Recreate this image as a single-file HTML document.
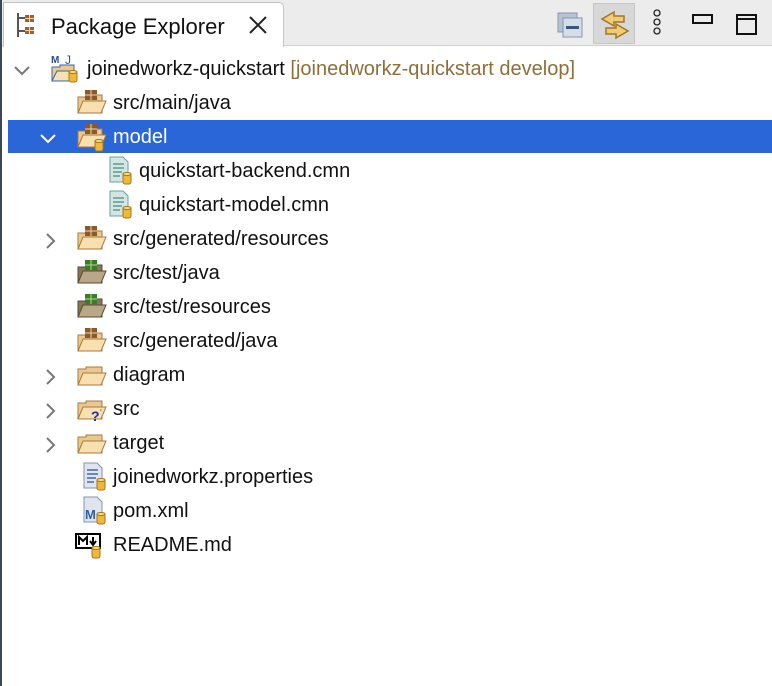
<!DOCTYPE html>
<html><head><meta charset="utf-8"><style>
body{margin:0;width:772px;height:686px;overflow:hidden;background:#fff;font-family:"Liberation Sans",Arial,sans-serif;position:relative}
.abs{position:absolute}
.row{position:absolute;left:8px;right:0;height:34px;font-size:20px;line-height:36px;color:#111}
.row span.t{position:absolute;top:0}
.chev{position:absolute;top:10px}
.ic{position:absolute;top:3px}
</style></head><body>
<div class="abs" style="left:0;top:0;width:772px;height:45px;background:#ececec;border-bottom:1px solid #cfcfcf"></div>
<div class="abs" style="left:3px;top:2px;width:279px;height:44px;background:#fff;border:1px solid #c4c4c4;border-bottom:none;border-radius:0 5px 0 0"></div>
<div class="abs" style="left:0;top:0;width:2px;height:686px;background:#3b4656"></div>
<svg class="abs" style="left:14px;top:12px" width="26" height="26" viewBox="0 0 26 26"><path d="M4 1V25M4 6H12M4 19H12" stroke="#555" stroke-width="2" fill="none"/><rect x="11" y="3" width="9" height="7" fill="#a0622a"/><rect x="11" y="15" width="9" height="7" fill="#a0622a"/><path d="M15.5 3V10M11 6.5H20M15.5 15V22M11 18.5H20" stroke="#f1d6a8" stroke-width="1"/></svg>
<div class="abs" style="left:51px;top:13px;font-size:22px;line-height:28px;color:#111">Package Explorer</div>
<svg class="abs" style="left:248px;top:15px" width="20" height="20"><path d="M2 2L18 18M18 2L2 18" stroke="#222" stroke-width="2"/></svg>
<div class="abs" style="left:593px;top:3px;width:42px;height:41px;background:#d8d8d8;border:1px solid #c6c6c6;box-sizing:border-box"></div>
<svg class="abs" style="left:555px;top:10px" width="32" height="30"><rect x="3" y="3" width="19" height="19" fill="#b6c3d3" stroke="#8796ab"/><rect x="8" y="8" width="19" height="19" fill="#d5dde7" stroke="#8796ab"/><rect x="11" y="16" width="13" height="3" fill="#3a5678"/></svg>
<svg class="abs" style="left:598px;top:9px" width="34" height="32"><path d="M16 3L4 10L16 17V13H26V7H16Z" fill="#f0cc77" stroke="#a47624" stroke-width="1.5"/><path d="M18 15L30 22L18 29V25H8V19H18Z" fill="#f0cc77" stroke="#a47624" stroke-width="1.5"/></svg>
<svg class="abs" style="left:650px;top:9px" width="14" height="28"><circle cx="7" cy="4" r="3" fill="none" stroke="#222" stroke-width="1.3"/><circle cx="7" cy="13" r="3" fill="none" stroke="#222" stroke-width="1.3"/><circle cx="7" cy="22" r="3" fill="none" stroke="#222" stroke-width="1.3"/></svg>
<div class="abs" style="left:692px;top:14px;width:17px;height:6px;border:2px solid #111"></div>
<div class="abs" style="left:736px;top:14px;width:17px;height:17px;border:2px solid #111"></div>
<div class="abs" style="left:738px;top:18px;width:17px;height:2px;background:#111"></div>

<div class="abs" style="left:8px;top:120px;width:764px;height:33px;background:#2b66d8"></div>

<svg width="0" height="0" style="position:absolute"><defs>
<g id="pkg"><path d="M2 9H10V7H26V25H2Z" fill="#e9c98f" stroke="#a9783c"/><path d="M2 25L7 13H30L25 25Z" fill="#f8e0b0" stroke="#a9783c"/><rect x="9" y="2" width="12" height="10" fill="#8a5a2c"/><path d="M15 2V12M9 7H21" stroke="#f1d6a8"/></g>
<g id="tpkg"><path d="M2 9H10V7H26V25H2Z" fill="#857559" stroke="#5a4a32"/><path d="M2 25L7 13H30L25 25Z" fill="#b8a887" stroke="#5a4a32"/><rect x="9" y="2" width="12" height="10" fill="#3d7a2a"/><path d="M15 2V12M9 7H21" stroke="#a8e08a"/></g>
<g id="fold"><path d="M2 9H10V7H26V25H2Z" fill="#e9c98f" stroke="#a9783c"/><path d="M2 25L7 13H30L25 25Z" fill="#f8e0b0" stroke="#a9783c"/></g>
<g id="jar"><rect x="19" y="18" width="8" height="11" rx="2" fill="#f0b73b" stroke="#a6761a"/><ellipse cx="23" cy="19" rx="4" ry="1.5" fill="#fbe08a" stroke="#a6761a"/></g>
<g id="doc"><path d="M6 2H19L24 7V27H6Z" fill="#d4e6e4" stroke="#6aa39c"/><path d="M9 9H20M9 13H20M9 17H18M9 21H16" stroke="#5e9a92" stroke-width="1.5"/></g>
<g id="chv"><path d="M3 3L10 10L3 17" stroke="#777" stroke-width="2" fill="none"/></g>
<g id="chd"><path d="M2 4L9 11L16 4" stroke="#777" stroke-width="2" fill="none"/></g>
</defs></svg>

<div class="row" style="top:51px"><svg class="chev" style="left:5px;top:12px" width="18" height="14"><use href="#chd"/></svg>
<svg class="ic" style="left:42px;top:2px" width="32" height="32"><text x="1" y="10" font-size="10" font-family="Liberation Sans" fill="#2a4f9a" font-weight="bold">M</text><text x="15" y="11" font-size="12" font-family="Liberation Sans" fill="#2a4f9a">J</text><path d="M2 14H10V12H24V28H2Z" fill="#e9c98f" stroke="#3a66b0"/><path d="M2 28L7 18H26L22 28Z" fill="#f8e0b0" stroke="#3a66b0"/><use href="#jar"/></svg>
<span class="t" style="left:79px">joinedworkz-quickstart <span style="color:#8d6f3a">[joinedworkz-quickstart develop]</span></span></div>
<div class="row" style="top:85px"><svg class="ic" style="left:68px" width="32" height="30"><use href="#pkg"/></svg><span class="t" style="left:105px">src/main/java</span></div>
<div class="row" style="top:119px;color:#fff"><svg class="chev" style="left:31px;top:12px" width="18" height="14"><path d="M2 4L9 11L16 4" stroke="#fff" stroke-width="2" fill="none"/></svg><svg class="ic" style="left:68px" width="32" height="32"><use href="#pkg"/><use href="#jar"/></svg><span class="t" style="left:105px">model</span></div>
<div class="row" style="top:153px"><svg class="ic" style="left:96px;top:2px" width="30" height="30"><use href="#doc"/><use href="#jar"/></svg><span class="t" style="left:131px">quickstart-backend.cmn</span></div>
<div class="row" style="top:187px"><svg class="ic" style="left:96px;top:2px" width="30" height="30"><use href="#doc"/><use href="#jar"/></svg><span class="t" style="left:131px">quickstart-model.cmn</span></div>
<div class="row" style="top:221px"><svg class="chev" style="left:36px" width="14" height="20"><use href="#chv"/></svg><svg class="ic" style="left:68px" width="32" height="30"><use href="#pkg"/></svg><span class="t" style="left:105px">src/generated/resources</span></div>
<div class="row" style="top:255px"><svg class="ic" style="left:68px" width="32" height="30"><use href="#tpkg"/></svg><span class="t" style="left:105px">src/test/java</span></div>
<div class="row" style="top:289px"><svg class="ic" style="left:68px" width="32" height="30"><use href="#tpkg"/></svg><span class="t" style="left:105px">src/test/resources</span></div>
<div class="row" style="top:323px"><svg class="ic" style="left:68px" width="32" height="30"><use href="#pkg"/></svg><span class="t" style="left:105px">src/generated/java</span></div>
<div class="row" style="top:357px"><svg class="chev" style="left:36px" width="14" height="20"><use href="#chv"/></svg><svg class="ic" style="left:68px" width="32" height="30"><use href="#fold"/></svg><span class="t" style="left:105px">diagram</span></div>
<div class="row" style="top:391px"><svg class="chev" style="left:36px" width="14" height="20"><use href="#chv"/></svg><svg class="ic" style="left:68px" width="34" height="30"><use href="#fold"/><text x="15" y="27" font-size="14" font-weight="bold" font-family="Liberation Sans" fill="#1a2fa8">?</text><text x="24" y="22" font-size="10" fill="#8a6a3a" font-family="Liberation Sans">'</text></svg><span class="t" style="left:105px">src</span></div>
<div class="row" style="top:425px"><svg class="chev" style="left:36px" width="14" height="20"><use href="#chv"/></svg><svg class="ic" style="left:68px" width="32" height="30"><use href="#fold"/></svg><span class="t" style="left:105px">target</span></div>
<div class="row" style="top:459px"><svg class="ic" style="left:70px;top:2px" width="30" height="30"><path d="M6 2H19L24 7V27H6Z" fill="#dfe5ee" stroke="#8593aa"/><path d="M9 9H20M9 13H20M9 17H18M9 21H16" stroke="#3f6aa8" stroke-width="1.5"/><use href="#jar"/></svg><span class="t" style="left:105px">joinedworkz.properties</span></div>
<div class="row" style="top:493px"><svg class="ic" style="left:70px;top:2px" width="30" height="30"><path d="M6 2H19L24 7V27H6Z" fill="#dfe5ee" stroke="#8593aa"/><text x="7" y="24" font-size="13" font-weight="bold" font-family="Liberation Sans" fill="#2f5fa8">M</text><use href="#jar"/></svg><span class="t" style="left:105px">pom.xml</span></div>
<div class="row" style="top:527px"><svg class="ic" style="left:66px;top:2px" width="34" height="30"><rect x="2" y="5" width="24" height="14" fill="#fff" stroke="#000" stroke-width="2"/><path d="M5 16V8L9 12L13 8V16M19 8V15M16 12L19 16L22 12" stroke="#000" stroke-width="2" fill="none"/><use href="#jar" transform="translate(-1,0)"/></svg><span class="t" style="left:105px">README.md</span></div>
</body></html>
